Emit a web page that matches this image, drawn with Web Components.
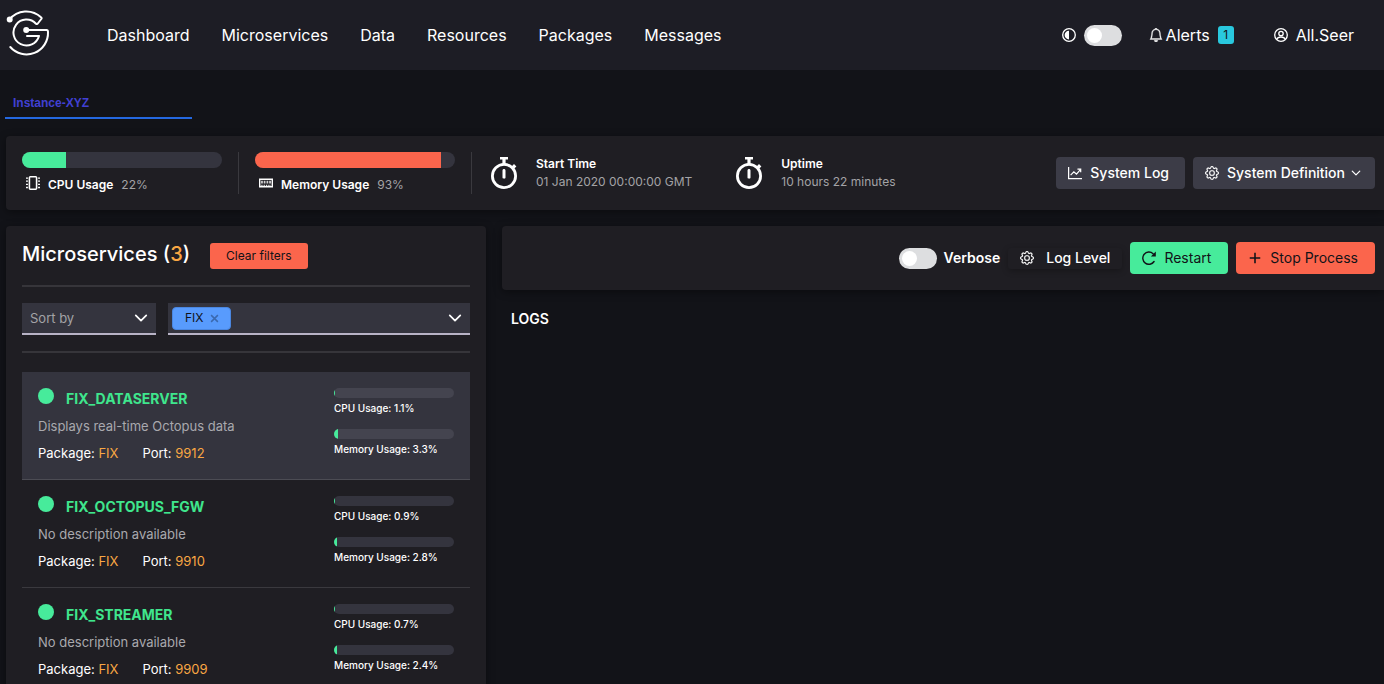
<!DOCTYPE html>
<html lang="en">
<head>
<meta charset="utf-8">
<title>System monitor</title>
<style>
  body { margin: 0; background: #121318; color: #fff; font-family: Inter, "Liberation Sans", sans-serif; font-size: 13px; line-height: 18px; }
</style>
</head>
<body>
<monitor-app></monitor-app>
<script>
const BASE = `
  *, *::before { box-sizing: border-box; }
  :host([hidden]) { display: none; }
  a { color: inherit; text-decoration: none; }
  button { font: inherit; color: inherit; border: 0; margin: 0; padding: 0; background: none; cursor: pointer; white-space: nowrap; }
`;
function define(name, html, setup) {
  const template = document.createElement('template');
  customElements.define(name, class extends HTMLElement {
    constructor() {
      super();
      this.attachShadow({ mode: 'open' });
    }
    connectedCallback() {
      if (this.shadowRoot.childNodes.length) return;
      template.innerHTML = typeof html === 'function' ? html(this) : html;
      this.shadowRoot.append(template.content.cloneNode(true));
      if (setup) setup(this);
    }
  });
}

const ICONS = {
  half: '<circle cx="8" cy="8" r="7.2" fill="none" stroke="currentColor" stroke-width="1.5"/><path d="M8 3v10A5 5 0 0 1 8 3z"/>',
  bell: '<path stroke="currentColor" stroke-width=".4" d="M8 16a2 2 0 0 0 2-2H6a2 2 0 0 0 2 2zM8 1.918l-.797.161A4.002 4.002 0 0 0 4 6c0 .628-.134 2.197-.459 3.742-.16.767-.376 1.566-.663 2.258h10.244c-.287-.692-.502-1.49-.663-2.258C12.134 8.197 12 6.628 12 6a4.002 4.002 0 0 0-3.203-3.92L8 1.917zM14.22 12c.223.447.481.801.78 1H1c.299-.199.557-.553.78-1C2.68 10.2 3 6.88 3 6c0-2.42 1.72-4.44 4.005-4.901a1 1 0 1 1 1.99 0A5.002 5.002 0 0 1 13 6c0 .88.32 4.2 1.22 6z"/>',
  user: '<g fill="none" stroke="currentColor" stroke-width="1.5"><circle cx="8" cy="8" r="7.2"/><circle cx="8" cy="6.3" r="2.5"/><path d="M3.2 13c.8-2 2.400-2.700 4.800-2.700s4 .7 4.800 2.700"/></g>',
  chip: '<rect x="3.900" y=".9" width="8.200" height="14.200" rx="1" fill="none" stroke="currentColor" stroke-width="1.800"/><path d="M0 1.600h2.200v1.500H0zM0 5.200h2.200v1.500H0zM0 8.800h2.200v1.500H0zM0 12.400h2.200v1.500H0zM13.800 1.600H16v1.500h-2.200zM13.800 5.200H16v1.500h-2.200zM13.800 8.800H16v1.500h-2.200zM13.800 12.400H16v1.500h-2.200z"/>',
  memory: '<path d="M.8 3.700h14.400v8.600H.8z" fill="none" stroke="currentColor" stroke-width="1.600"/><path d="M2.400 5.500h2v3h-2zM5.400 5.500h2v3h-2zM8.600 5.500h2v3h-2zM11.600 5.500h2v3h-2z" opacity=".8"/><path d="M2 10h1v2.500H2zM4 10h1v2.500H4zM6 10h1v2.500H6zM8 10h1v2.500H8zM10 10h1v2.500h-1zM12 10h1v2.500h-1z"/>',
  watch: '<circle cx="8" cy="9.500" r="5.800" fill="none" stroke="currentColor" stroke-width="1.400"/><path d="M6 0h4v1.300H6zM7.200 1h1.600v2.500H7.200zM7.250 6.800c0-1 1.500-1 1.500 0v3.500c0 .8-1.500.8-1.500 0zM11.300 5.200l1.700-1.700 1.200 1.200-1.700 1.700z"/>',
  chart: '<path d="M.7 1v13.300H16" fill="none" stroke="currentColor" stroke-width="1.400"/><path d="M3 10.500l3.700-3.800 3 2.700 4.700-5.600M10.800 3.600h3.700v3.500" fill="none" stroke="currentColor" stroke-width="1.400"/>',
  gear: '<g stroke="currentColor" stroke-width=".3"><path d="M8 4.754a3.246 3.246 0 1 0 0 6.492 3.246 3.246 0 0 0 0-6.492zM5.754 8a2.246 2.246 0 1 1 4.492 0 2.246 2.246 0 0 1-4.492 0z"/><path d="M9.796 1.343c-.527-1.79-3.065-1.79-3.592 0l-.094.319a.873.873 0 0 1-1.255.52l-.292-.16c-1.64-.892-3.433.902-2.54 2.541l.159.292a.873.873 0 0 1-.52 1.255l-.319.094c-1.79.527-1.79 3.065 0 3.592l.319.094a.873.873 0 0 1 .52 1.255l-.16.292c-.892 1.64.901 3.434 2.541 2.54l.292-.159a.873.873 0 0 1 1.255.52l.094.319c.527 1.79 3.065 1.79 3.592 0l.094-.319a.873.873 0 0 1 1.255-.52l.292.16c1.64.893 3.434-.902 2.54-2.541l-.159-.292a.873.873 0 0 1 .52-1.255l.319-.094c1.79-.527 1.79-3.065 0-3.592l-.319-.094a.873.873 0 0 1-.52-1.255l.16-.292c.893-1.64-.902-3.433-2.541-2.54l-.292.159a.873.873 0 0 1-1.255-.52l-.094-.319zm-2.633.283c.246-.835 1.428-.835 1.674 0l.094.319a1.873 1.873 0 0 0 2.693 1.115l.291-.16c.764-.415 1.6.42 1.184 1.185l-.159.292a1.873 1.873 0 0 0 1.116 2.692l.318.094c.835.246.835 1.428 0 1.674l-.319.094a1.873 1.873 0 0 0-1.115 2.693l.16.291c.415.764-.42 1.6-1.185 1.184l-.291-.159a1.873 1.873 0 0 0-2.693 1.116l-.094.318c-.246.835-1.428.835-1.674 0l-.094-.319a1.873 1.873 0 0 0-2.692-1.115l-.292.16c-.764.415-1.6-.42-1.184-1.185l.159-.291A1.873 1.873 0 0 0 1.945 8.93l-.319-.094c-.835-.246-.835-1.428 0-1.674l.319-.094A1.873 1.873 0 0 0 3.06 4.377l-.16-.292c-.415-.764.42-1.6 1.185-1.184l.292.159a1.873 1.873 0 0 0 2.692-1.115l.094-.319z"/></g>',
  chevron: '<path d="M2 5l6 6 6-6" fill="none" stroke="currentColor" stroke-width="2" stroke-linecap="round" stroke-linejoin="round"/>',
  reload: '<path d="M13.800 12A7 7 0 1 1 12.700 3.100" fill="none" stroke="currentColor" stroke-width="1.600" stroke-linecap="round"/><path d="M15.800.6v5.600h-5.600z"/>',
  plus: '<path d="M8 2v12M2 8h12" fill="none" stroke="currentColor" stroke-width="1.800"/>',
  cross: '<path d="M2 2l12 12M14 2L2 14" fill="none" stroke="currentColor" stroke-width="2.600"/>'
};

define('ui-icon', el => `
  <style>${BASE}
    :host { display: block; flex: none; width: 14px; height: 14px; }
    svg { display: block; width: 100%; height: 100%; fill: currentColor; }
  </style>
  <svg viewBox="0 0 16 16" aria-hidden="true">${ICONS[el.getAttribute('name')]}</svg>`);

define('ui-toggle', `
  <style>${BASE}
    :host { display: block; }
    label { display: flex; align-items: center; gap: 7px; }
    input { appearance: none; flex: none; display: flex; align-items: center; width: 38px; height: 21px; margin: 0; padding: 0 3px; border-radius: 11px; background: #dddee0; }
    input::before { content: ""; width: 15px; height: 15px; border-radius: 50%; background: #fff; }
    input:checked { justify-content: flex-end; background: #47eb9b; }
  </style>
  <label><input type="checkbox"><slot></slot></label>`,
  el => { if (el.title) el.shadowRoot.querySelector('input').setAttribute('aria-label', el.title); });

define('ui-meter', el => `
  <style>${BASE}
    :host { display: block; height: 16px; border-radius: 8px; overflow: hidden; background: var(--track, #34343e); color: #47eb9b; }
    div { height: 100%; width: ${el.getAttribute('value')}%; background: currentColor; }
  </style>
  <div role="progressbar" aria-valuenow="${el.getAttribute('value')}" aria-label="${el.getAttribute('label')}"></div>`);

define('ui-button', `
  <style>${BASE}
    :host { display: block; }
    button { display: flex; align-items: center; gap: 8px; height: 32px; padding: 0 16px 0 12px; border-radius: 4px; background: #3c3c47; font-size: 14px; font-weight: 500; }
    :host([kind=good]) button { padding-right: 17px; background: #47eb9b; color: #121318; font-weight: 400; }
    :host([kind=bad]) button { padding-right: 17px; background: #fb654c; color: #121318; font-weight: 400; }
    :host([kind=flat]) button { gap: 12px; height: 21px; padding: 0 12px; background: transparent; border-radius: 3px; box-shadow: 0 2px 6px #0004; }
    :host([kind=small]) button { height: 26px; background: #fb654c; color: #121318; font-size: 12px; font-weight: 400; padding: 0 16px; border-radius: 3px; }
  </style>
  <button type="button"><slot></slot></button>`);

define('app-header', `
  <style>${BASE}
    :host { display: flex; align-items: center; height: 70px; flex: none; padding: 0 30px 0 5px; background: #1d1d25; font-size: 16px; line-height: 24px; }
    .logo { display: block; width: 48px; height: 50px; margin-right: 54px; }
    nav { display: flex; gap: 32px; }
    .tools { display: flex; align-items: center; margin-left: auto; gap: 40px; }
    .group, .tools a { display: flex; align-items: center; gap: 8px; }
    .group { gap: 27px; }
    .theme { display: flex; align-items: center; gap: 8px; }
    .group a { gap: 3px; }
    .badge { min-width: 16px; height: 18px; margin-left: 5px; border-radius: 3px; background: #29c8de; color: #121318; font-size: 12px; line-height: 18px; text-align: center; }
  </style>
  <a class="logo" href="#" aria-label="Home">
    <svg viewBox="5 10 48 50" width="48" height="50" fill="none" stroke="#fff" stroke-width="2" stroke-linejoin="round" stroke-linecap="round">
      <path d="M9.500 19.500A21.500 21.500 0 0 1 41 17.200Q42 18 41.300 19L37.800 23.500Q37 24.500 36 23.700A13 13 0 1 0 39 36H27"/>
      <path d="M26 30H46.500Q48 30 48 32A21.500 21.500 0 0 1 10.300 47"/>
      <circle cx="9.700" cy="19.500" r="2" fill="#fff"/><circle cx="26.200" cy="30" r="2" fill="#fff"/>
    </svg>
  </a>
  <nav>
    <a href="#">Dashboard</a><a href="#">Microservices</a><a href="#">Data</a>
    <a href="#">Resources</a><a href="#">Packages</a><a href="#">Messages</a>
  </nav>
  <div class="tools">
    <div class="group">
      <div class="theme"><ui-icon name="half"></ui-icon><ui-toggle title="Light theme"></ui-toggle></div>
      <a href="#"><ui-icon name="bell"></ui-icon>Alerts <span class="badge">1</span></a>
    </div>
    <a href="#"><ui-icon name="user"></ui-icon>All.Seer</a>
  </div>`);

define('instance-tabs', `
  <style>${BASE}
    :host { display: flex; flex: none; padding: 17px 5px; }
    a { width: 187px; padding: 8px 8px 6px; border-bottom: 2px solid #2468e0; color: #4140d2; font: bold 12px/16px "Liberation Sans", sans-serif; }
  </style>
  <a href="#" aria-current="page">Instance-XYZ</a>`);

define('usage-stat', el => `
  <style>${BASE}
    :host { display: block; flex: none; padding-right: 16px; border-right: 1px solid #3a393e; }
    ui-meter { width: 200px; ${el.getAttribute('tone') === 'bad' ? 'color: #fb654c;' : ''} }
    .label { display: flex; gap: 8px; margin-top: 8px; padding-left: 4px; color: #a3a3a6; }
    .label ui-icon { color: #fff; }
    b { color: #fff; font-weight: 600; }
  </style>
  <ui-meter value="${el.getAttribute('value')}" label="${el.getAttribute('label')}"></ui-meter>
  <div class="label"><ui-icon name="${el.getAttribute('icon')}"></ui-icon><b>${el.getAttribute('label')}</b><span>${el.getAttribute('value')}%</span></div>`);

define('time-stat', el => `
  <style>${BASE}
    :host { display: flex; align-items: center; flex: none; gap: 16px; color: #a3a3a6; }
    ui-icon { width: 32px; height: 32px; color: #fff; }
    b { display: block; color: #fff; font-weight: 600; }
  </style>
  <ui-icon name="watch"></ui-icon><div><b>${el.getAttribute('label')}</b><slot></slot></div>`);

define('system-overview', `
  <style>${BASE}
    :host { display: flex; flex: none; align-items: center; gap: 16px; margin-left: 6px; padding: 16px 9px 16px 16px; border-radius: 4px 0 0 4px; background: #1f1e23; box-shadow: 0 2px 8px #0006; font-size: 12px; }
    .times { display: flex; gap: 41px; }
    .actions { display: flex; gap: 8px; margin-left: auto; }
    .small { width: 10px; height: 10px; margin: 0 -2px; }
  </style>
  <usage-stat icon="chip" label="CPU Usage" value="22"></usage-stat>
  <usage-stat icon="memory" label="Memory Usage" value="93" tone="bad"></usage-stat>
  <div class="times">
    <time-stat label="Start Time">01 Jan 2020 00:00:00 GMT</time-stat>
    <time-stat label="Uptime">10 hours 22 minutes</time-stat>
  </div>
  <div class="actions">
    <ui-button><ui-icon name="chart"></ui-icon>System Log</ui-button>
    <ui-button><ui-icon name="gear"></ui-icon>System Definition<ui-icon class="small" name="chevron"></ui-icon></ui-button>
  </div>`);

define('service-card', el => {
  const a = n => el.getAttribute(n);
  return `
  <style>${BASE}
    :host { display: flex; justify-content: space-between; padding: 16px; border-bottom: 1px solid #3a393e; }
    :host([selected]) { background: #34343e; border-color: #4c4c54; --track: #44444f; }
    .title { display: flex; gap: 12px; margin-bottom: 7px; }
    .dot { width: 16px; height: 16px; border-radius: 50%; background: #47eb9b; }
    h3 { margin: 0; color: #3fe68d; font-size: 14px; line-height: 22px; font-weight: 700; }
    p { margin: 0; line-height: 19px; color: #a9a9ae; }
    .facts { display: flex; gap: 24px; margin-top: 8px; color: #fff; }
    em { font-style: normal; color: #f9a743; }
    .usage { flex: none; width: 120px; font-size: 10px; line-height: 15px; font-weight: 500; }
    ui-meter { height: 10px; margin-bottom: 3px; }
    .usage div + div { margin-top: 13px; }
  </style>
  <div>
    <div class="title"><span class="dot"></span><h3>${a('name')}</h3></div>
    <p>${a('about')}</p>
    <p class="facts"><span>Package: <em>FIX</em></span><span>Port: <em>${a('port')}</em></span></p>
  </div>
  <div class="usage">
    <div><ui-meter value="${a('cpu')}" label="CPU Usage"></ui-meter>CPU Usage: ${a('cpu')}%</div>
    <div><ui-meter value="${a('memory')}" label="Memory Usage"></ui-meter>Memory Usage: ${a('memory')}%</div>
  </div>`;
});

define('service-filters', `
  <style>${BASE}
    :host { display: flex; gap: 12px; padding: 16px 0; border: solid #36353a; border-width: 2px 0; }
    .field { display: grid; grid-template-columns: 1fr 30px; align-items: center; height: 32px; background: #34343e; border-bottom: 2px solid #b8b3c6; }
    .field ui-icon { grid-area: 1 / 2; pointer-events: none; justify-self: center; }
    .sort { width: 134px; }
    select { appearance: none; grid-area: 1 / 1 / 2 / 3; height: 30px; border: 0; padding: 0 8px; background: none; color: #a3a3a6; font: inherit; }
    .packages { flex: 1; }
    .values { display: flex; align-items: center; gap: 4px; padding-left: 4px; min-width: 0; }
    .tag { display: flex; align-items: center; gap: 6px; height: 23px; padding: 0 11px 0 12px; border: 1px solid #4a86e0; border-radius: 4px; background: #589bfd; color: #121318; font-size: 12px; }
    .tag button { color: #3a68ae; }
    .tag ui-icon { width: 9px; height: 9px; }
    input { flex: 1; min-width: 0; height: 24px; border: 0; outline: 0; background: none; color: inherit; font: inherit; }
  </style>
  <div class="field sort">
    <select aria-label="Sort by"><option>Sort by</option><option>Name</option><option>Port</option></select>
    <ui-icon name="chevron"></ui-icon>
  </div>
  <div class="field packages">
    <div class="values">
      <span class="tag">FIX<button type="button" aria-label="Remove FIX"><ui-icon name="cross"></ui-icon></button></span>
      <input type="text" role="combobox" aria-label="Packages" aria-expanded="false">
    </div>
    <ui-icon name="chevron"></ui-icon>
  </div>`);

define('service-list', `
  <style>${BASE}
    :host { display: block; padding: 16px; border-radius: 4px 4px 0 0; background: #1f1e23; box-shadow: 0 2px 8px #0006; }
    header { display: flex; align-items: flex-start; gap: 20px; margin-bottom: 16px; }
    h2 { margin: 0; font-size: 20px; line-height: 24px; font-weight: 500; }
    h2 span { color: #f9a743; }
    header ui-button { padding-top: 1px; }
    service-filters { margin-bottom: 19px; }
  </style>
  <header><h2>Microservices (<span>3</span>)</h2><ui-button kind="small">Clear filters</ui-button></header>
  <service-filters></service-filters>
  <service-card selected name="FIX_DATASERVER" about="Displays real-time Octopus data" port="9912" cpu="1.1" memory="3.3"></service-card>
  <service-card name="FIX_OCTOPUS_FGW" about="No description available" port="9910" cpu="0.9" memory="2.8"></service-card>
  <service-card name="FIX_STREAMER" about="No description available" port="9909" cpu="0.7" memory="2.4"></service-card>`);

define('process-panel', `
  <style>${BASE}
    :host { display: block; }
    .bar { display: flex; justify-content: flex-end; align-items: center; gap: 8px; padding: 16px 9px 16px 16px; border-radius: 4px 0 0 4px; background: #1f1e23; box-shadow: 0 2px 8px #0006; font-size: 14px; font-weight: 600; }
    h2 { margin: 20px 9px; font-size: 14px; line-height: 18px; font-weight: 600; }
  </style>
  <div class="bar">
    <ui-toggle>Verbose</ui-toggle>
    <ui-button kind="flat"><ui-icon name="gear"></ui-icon>Log Level</ui-button>
    <ui-button kind="good"><ui-icon name="reload"></ui-icon>Restart</ui-button>
    <ui-button kind="bad"><ui-icon name="plus"></ui-icon>Stop Process</ui-button>
  </div>
  <h2>LOGS</h2>`);

define('monitor-app', `
  <style>${BASE}
    :host { display: flex; flex-direction: column; height: 100vh; overflow: hidden; }
    main { display: grid; grid-template-columns: 480px 1fr; gap: 16px; flex: 1; padding: 16px 0 0 6px; }
  </style>
  <app-header></app-header>
  <instance-tabs></instance-tabs>
  <system-overview></system-overview>
  <main><service-list></service-list><process-panel></process-panel></main>`);
</script>
</body>
</html>
